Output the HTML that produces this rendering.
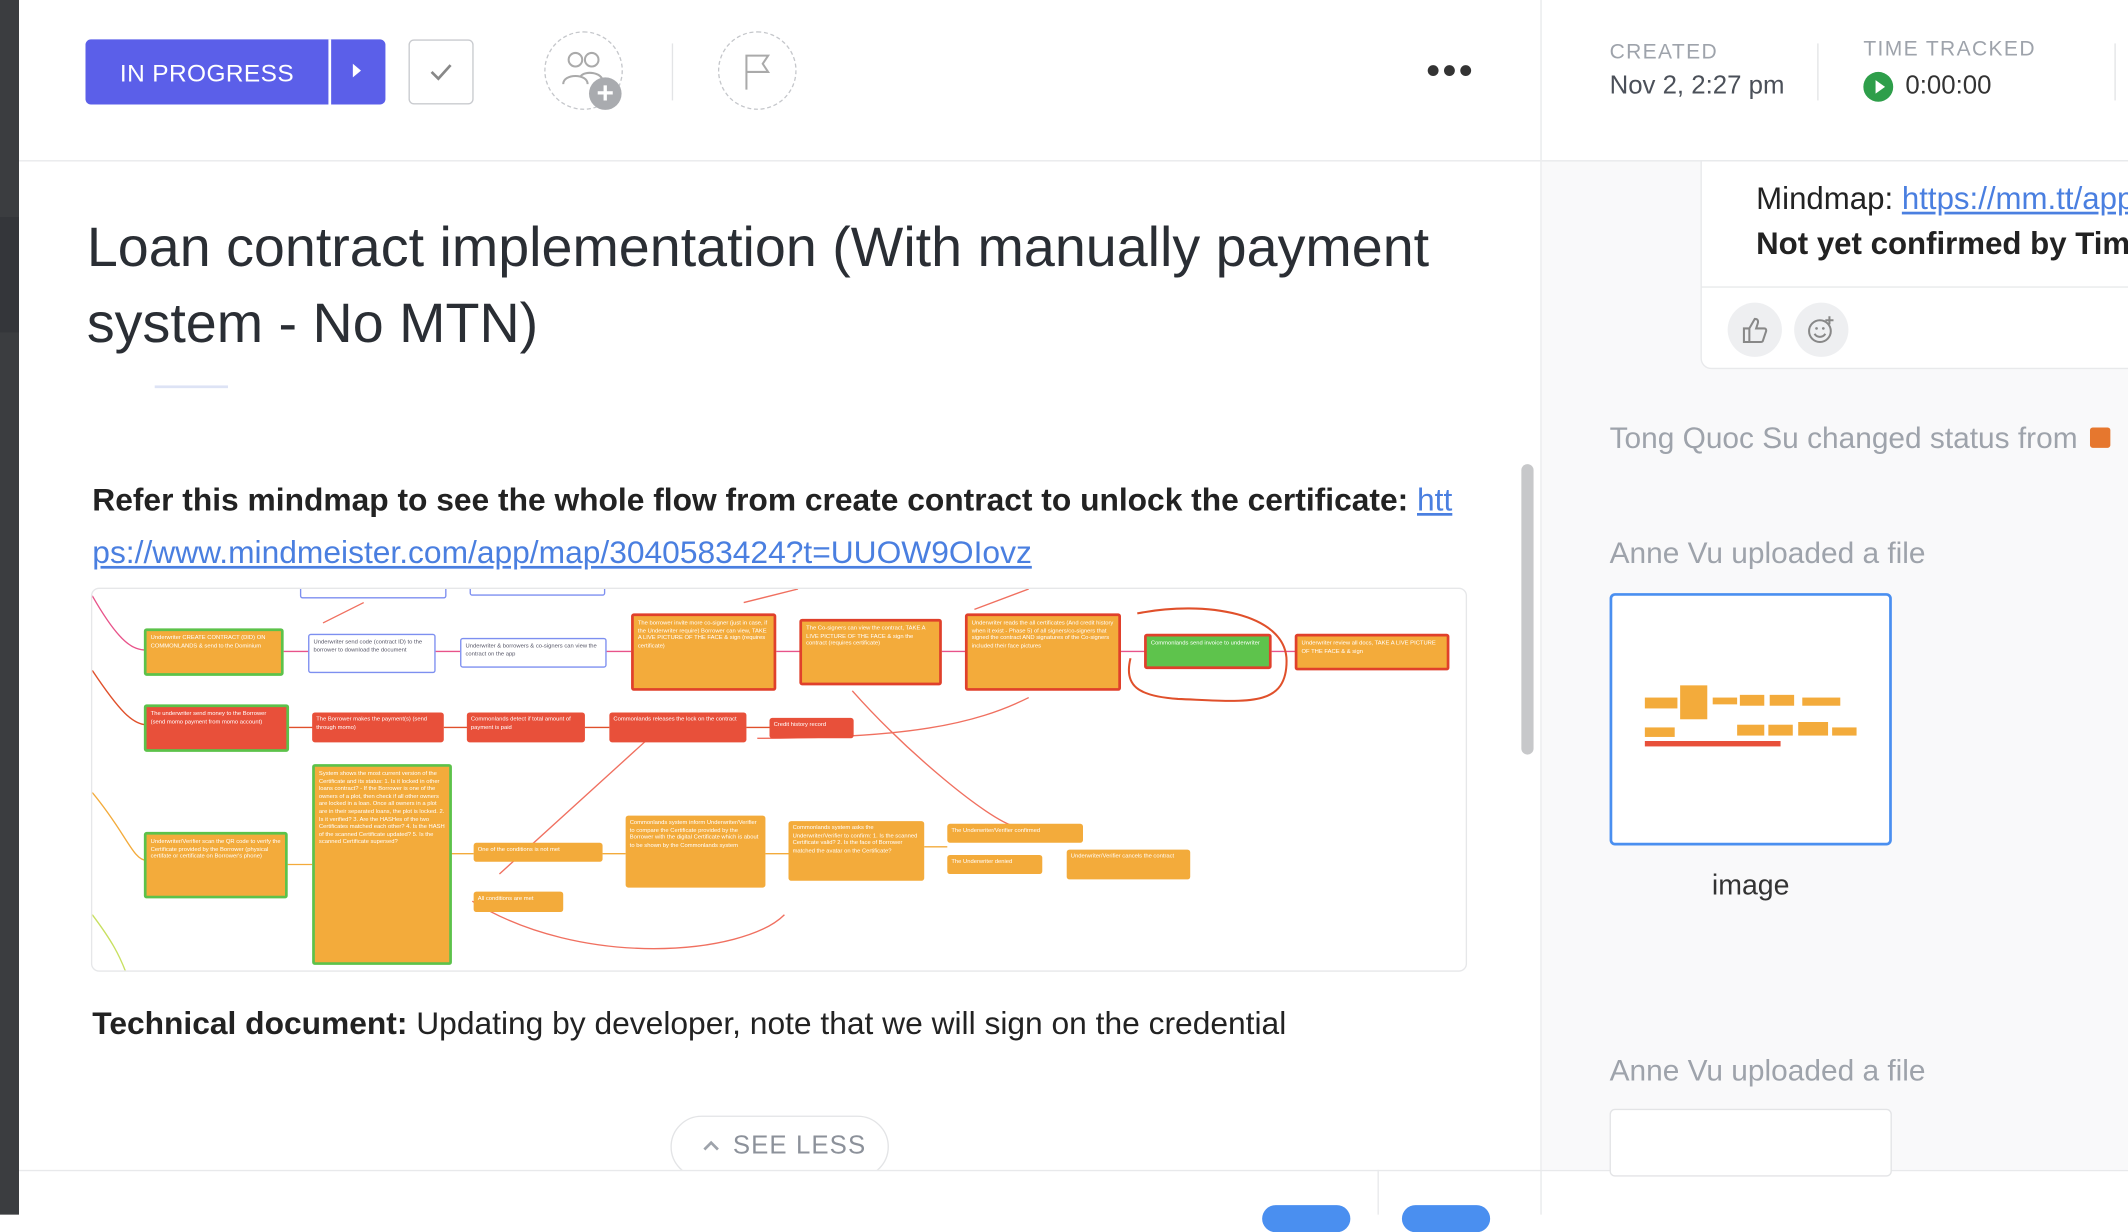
<!DOCTYPE html>
<html><head><meta charset="utf-8"><style>
*{box-sizing:border-box;margin:0;padding:0}
html,body{width:2128px;height:1214px;overflow:hidden;background:#fff;font-family:"Liberation Sans",sans-serif}
#w{position:absolute;left:0;top:0;width:1568px;height:895px;transform:scale(1.35714);transform-origin:0 0}
.a{position:absolute}
.bx{position:absolute;font-size:4.3px;line-height:5.6px;color:#fff;padding:2px 3px;border-radius:2px;overflow:hidden}
.o{background:#f3ab3b}.r{background:#e8503a}
.gb{border:2px solid #5cc24a}.rb{border:2px solid #e0402b}.wb{background:#fff;border:1px solid #7d8ff0;color:#556}
.gr{background:#5ec34c}
</style></head><body><div id="w">
<div class="a" style="left:0;top:0;width:14px;height:895px;background:#3b3d40"></div>
<div class="a" style="left:0;top:160px;width:14px;height:85px;background:#34363a"></div>
<div class="a" style="left:14px;top:0;width:1121px;height:895px;background:#fff"></div>
<div class="a" style="left:14px;top:118px;width:1121px;height:1px;background:#e8e9eb"></div>
<div class="a" style="left:63px;top:29px;width:221px;height:48px;background:#5b5fe9;border-radius:4px"></div>
<div class="a" style="left:63px;top:29px;width:179px;height:48px;color:#fff;font-size:18px;line-height:50px;text-align:center;letter-spacing:.3px">IN PROGRESS</div>
<div class="a" style="left:242px;top:29px;width:2px;height:48px;background:#fff"></div>
<div class="a" style="left:260px;top:47px;border-left:6px solid #fff;border-top:5px solid transparent;border-bottom:5px solid transparent"></div>
<div class="a" style="left:301px;top:29px;width:48px;height:48px;border:1.5px solid #c9cbcf;border-radius:4px"></div>
<svg class="a" style="left:315px;top:43px" width="20" height="20"><path d="M3 10l5 5 9-10" fill="none" stroke="#888" stroke-width="2"/></svg>
<div class="a" style="left:401px;top:23px;width:58px;height:58px;border:1.5px dashed #c5c7cb;border-radius:50%"></div>
<svg class="a" style="left:412px;top:36px" width="40" height="34"><circle cx="12" cy="8" r="5" fill="none" stroke="#aaa" stroke-width="1.5"/><circle cx="24" cy="8" r="5" fill="none" stroke="#aaa" stroke-width="1.5"/><path d="M3 26c0-8 18-8 18 0M16 20c3-4 16-3 16 4" fill="none" stroke="#aaa" stroke-width="1.5"/></svg>
<div class="a" style="left:434px;top:57px;width:24px;height:24px;border-radius:50%;background:#a9abaf;color:#fff;font-size:22px;line-height:24px;text-align:center;font-weight:bold">+</div>
<div class="a" style="left:495px;top:32px;width:1px;height:42px;background:#e3e4e6"></div>
<div class="a" style="left:529px;top:23px;width:58px;height:58px;border:1.5px dashed #c5c7cb;border-radius:50%"></div>
<svg class="a" style="left:546px;top:38px" width="26" height="30"><path d="M4 28V3h16l-4 6 4 6H4" fill="none" stroke="#aaa" stroke-width="1.5"/></svg>
<div class="a" style="left:1052px;top:48px;font-size:0">
<span style="display:inline-block;width:8px;height:8px;border-radius:50%;background:#333;margin-right:4px"></span><span style="display:inline-block;width:8px;height:8px;border-radius:50%;background:#333;margin-right:4px"></span><span style="display:inline-block;width:8px;height:8px;border-radius:50%;background:#333"></span></div>
<div class="a" style="left:64px;top:154px;width:1060px;font-size:41px;line-height:56px;color:#2a2e34">Loan contract implementation (With manually payment system - No MTN)</div>
<div class="a" style="left:114px;top:284px;width:54px;height:2px;background:#dde3f5"></div>
<div class="a" style="left:68px;top:349px;width:1030px;font-size:23.4px;line-height:39px;color:#222"><b>Refer this mindmap to see the whole flow from create contract to unlock the certificate: </b><span style="color:#4a7fe0;text-decoration:underline">htt ps://www.mindmeister.com/app/map/3040583424?t=UUOW9OIovz</span></div>
<div class="a" style="left:67px;top:433px;width:1014px;height:283px;border:1px solid #e6e7e9;border-radius:6px;overflow:hidden;background:#fff">
<svg class="a" style="left:0;top:0" width="1014" height="283"><g fill="none" stroke-width="1">
<path d="M0 5C20 40 30 45 40 45" stroke="#e8538a"/><path d="M0 60C20 90 30 100 40 100" stroke="#e0502b"/><path d="M0 150C25 180 30 200 40 200" stroke="#f3ab3b"/><path d="M0 240C15 260 20 270 25 283" stroke="#c8e060"/>
<path d="M141 46h18M253 46h18M379 46h18M504 46h18M626 46h18M758 46h18M869 46h18" stroke="#e8538a"/>
<path d="M145 102h18M259 102h18M363 102h18M482 102h18" stroke="#e0502b"/>
<path d="M144 203h18M264 195h17M376 195h17M496 195h17M613 190h17M730 205h17" stroke="#f3ab3b"/>
<path d="M280 230C360 280 480 270 510 240M490 110C600 110 650 100 690 80M560 75C600 120 660 170 680 175M480 10L520 0M650 15L690 0M410 110L300 210M200 10L170 25" stroke="#f07060"/>
<path d="M770 18c50-10 110 0 110 35s-30 30-80 28c-30-2-40-10-35-30" stroke="#e0502b" stroke-width="1.5"/>
</g></svg>
<div class="bx wb" style="left:153px;top:-3px;width:108px;height:10px"></div>
<div class="bx wb" style="left:278px;top:-3px;width:100px;height:8px"></div>
<div class="bx o gb" style="left:38px;top:29px;width:103px;height:35px">Underwriter CREATE CONTRACT (DID) ON COMMONLANDS &amp; send to the Dominium</div>
<div class="bx wb" style="left:159px;top:33px;width:94px;height:29px">Underwriter send code (contract ID) to the borrower to download the document</div>
<div class="bx wb" style="left:271px;top:36px;width:108px;height:22px">Underwriter &amp; borrowers &amp; co-signers can view the contract on the app</div>
<div class="bx o rb" style="left:397px;top:18px;width:107px;height:57px">The borrower invite more co-signer (just in case, if the Underwriter require) Borrower can view, TAKE A LIVE PICTURE OF THE FACE &amp; sign (requires certificate)</div>
<div class="bx o rb" style="left:521px;top:22px;width:105px;height:49px">The Co-signers can view the contract, TAKE A LIVE PICTURE OF THE FACE &amp; sign the contract (requires certificate)</div>
<div class="bx o rb" style="left:643px;top:18px;width:115px;height:57px">Underwriter reads the all certificates (And credit history when it exist - Phase 5) of all signers/co-signers that signed the contract AND signatures of the Co-signers included their face pictures</div>
<div class="bx gr rb" style="left:775px;top:33px;width:94px;height:26px">Commonlands send invoice to underwriter</div>
<div class="bx o rb" style="left:886px;top:33px;width:114px;height:27px">Underwriter review all docs, TAKE A LIVE PICTURE OF THE FACE &amp; &amp; sign</div>
<div class="bx r gb" style="left:38px;top:85px;width:107px;height:35px">The underwriter send money to the Borrower (send momo payment from momo account)</div>
<div class="bx r" style="left:162px;top:91px;width:97px;height:22px">The Borrower makes the payment(s) (send through momo)</div>
<div class="bx r" style="left:276px;top:91px;width:87px;height:22px">Commonlands detect if total amount of payment is paid</div>
<div class="bx r" style="left:381px;top:91px;width:101px;height:22px">Commonlands releases the lock on the contract</div>
<div class="bx r" style="left:499px;top:95px;width:62px;height:15px">Credit history record</div>
<div class="bx o gb" style="left:38px;top:179px;width:106px;height:49px">Underwriter/Verifier scan the QR code to verify the Certificate provided by the Borrower (physical certifate or certificate on Borrower's phone)</div>
<div class="bx o gb" style="left:162px;top:129px;width:103px;height:148px">System shows the most current version of the Certificate and its status: 1. Is it locked in other loans contract? - If the Borrower is one of the owners of a plot, then check if all other owners are locked in a loan. Once all owners in a plot are in their separated loans, the plot is locked. 2. Is it verified? 3. Are the HASHes of the two Certificates matched each other? 4. Is the HASH of the scanned Certificate updated? 5. Is the scanned Certificate supersed?</div>
<div class="bx o" style="left:281px;top:187px;width:95px;height:14px">One of the conditions is not met</div>
<div class="bx o" style="left:281px;top:223px;width:66px;height:15px">All conditions are met</div>
<div class="bx o" style="left:393px;top:167px;width:103px;height:53px">Commonlands system inform Underwriter/Verifier to compare the Certificate provided by the Borrower with the digital Certificate which is about to be shown by the Commonlands system</div>
<div class="bx o" style="left:513px;top:171px;width:100px;height:44px">Commonlands system asks the Underwriter/Verifier to confirm: 1. Is the scanned Certificate valid? 2. Is the face of Borrower matched the avatar on the Certificate?</div>
<div class="bx o" style="left:630px;top:173px;width:100px;height:14px">The Underwriter/Verifier confirmed</div>
<div class="bx o" style="left:630px;top:196px;width:70px;height:14px">The Underwriter denied</div>
<div class="bx o" style="left:718px;top:192px;width:91px;height:22px">Underwriter/Verifier cancels the contract</div>
</div>
<div class="a" style="left:68px;top:741px;font-size:23.4px;color:#222;white-space:nowrap"><b>Technical document:</b> Updating by developer, note that we will sign on the credential</div>
<div class="a" style="left:494px;top:822px;width:161px;height:46px;border:1px solid #e3e4e6;border-radius:23px;background:#fff"></div>
<svg class="a" style="left:517px;top:838px" width="14" height="12"><path d="M2 9l5-5 5 5" fill="none" stroke="#9ea3ab" stroke-width="2"/></svg>
<div class="a" style="left:540px;top:834px;font-size:19px;color:#8c919a;letter-spacing:.8px">SEE LESS</div>
<div class="a" style="left:1121px;top:342px;width:9px;height:214px;background:#c7c8ca;border-radius:5px"></div>
<div class="a" style="left:14px;top:862px;width:1554px;height:33px;background:#fff;border-top:1px solid #e8e9eb"></div>
<div class="a" style="left:1015px;top:862px;width:1px;height:33px;background:#e8e9eb"></div>
<div class="a" style="left:930px;top:888px;width:65px;height:20px;border-radius:10px;background:#4a8ff0"></div>
<div class="a" style="left:1033px;top:888px;width:65px;height:20px;border-radius:10px;background:#4a8ff0"></div>
<div class="a" style="left:1135px;top:0;width:1px;height:895px;background:#e8e9eb"></div>
<div class="a" style="left:1136px;top:119px;width:432px;height:743px;background:#f9f9fa"></div>
<div class="a" style="left:1136px;top:118px;width:432px;height:1px;background:#e8e9eb"></div>
<div class="a" style="left:1186px;top:30px;font-size:15.5px;color:#9ea3ab;letter-spacing:1px">CREATED</div>
<div class="a" style="left:1186px;top:53px;font-size:19px;color:#4b5059">Nov 2, 2:27 pm</div>
<div class="a" style="left:1339px;top:32px;width:1px;height:42px;background:#e3e4e6"></div>
<div class="a" style="left:1373px;top:28px;font-size:15.5px;color:#9ea3ab;letter-spacing:1px">TIME TRACKED</div>
<div class="a" style="left:1373px;top:53px;width:22px;height:22px;border-radius:50%;background:#2e9e4a"></div>
<div class="a" style="left:1382px;top:59px;border-left:7px solid #fff;border-top:5px solid transparent;border-bottom:5px solid transparent"></div>
<div class="a" style="left:1404px;top:53px;font-size:19px;color:#333">0:00:00</div>
<div class="a" style="left:1558px;top:32px;width:1px;height:42px;background:#e3e4e6"></div>
<div class="a" style="left:1253px;top:118px;width:330px;height:154px;background:#fff;border:1px solid #e8e9eb;border-radius:0 0 0 8px"></div>
<div class="a" style="left:1253px;top:211px;width:315px;height:1px;background:#e8e9eb"></div>
<div class="a" style="left:1294px;top:133px;font-size:23px;color:#222;white-space:nowrap">Mindmap: <span style="color:#4a7fe0;text-decoration:underline">https://mm.tt/app</span></div>
<div class="a" style="left:1294px;top:166px;font-size:23px;color:#222;font-weight:bold;white-space:nowrap">Not yet confirmed by Tim</div>
<div class="a" style="left:1273px;top:223px;width:40px;height:40px;border-radius:50%;background:#eeeff1"></div>
<svg class="a" style="left:1282px;top:232px" width="22" height="22"><path d="M3 10h4v10H3zM7 10l4-7c2 0 3 1 2 4l-1 3h6c1 0 2 1 1 3l-2 6c0 1-1 1-2 1H7" fill="none" stroke="#888" stroke-width="1.5"/></svg>
<div class="a" style="left:1322px;top:223px;width:40px;height:40px;border-radius:50%;background:#eeeff1"></div>
<svg class="a" style="left:1331px;top:232px" width="22" height="22"><circle cx="10" cy="12" r="8" fill="none" stroke="#888" stroke-width="1.5"/><path d="M6 14c2 3 6 3 8 0" fill="none" stroke="#888" stroke-width="1.5"/><circle cx="7.5" cy="10" r="1" fill="#888"/><circle cx="12.5" cy="10" r="1" fill="#888"/><path d="M17 1v6M14 4h6" stroke="#888" stroke-width="1.5"/></svg>
<div class="a" style="left:1186px;top:310px;font-size:22px;color:#9ea3ab;white-space:nowrap">Tong Quoc Su changed status from</div>
<div class="a" style="left:1540px;top:315px;width:15px;height:15px;background:#e6772e;border-radius:2px"></div>
<div class="a" style="left:1186px;top:395px;font-size:22px;color:#9ea3ab">Anne Vu uploaded a file</div>
<div class="a" style="left:1186px;top:437px;width:208px;height:186px;border:2px solid #4a8ff0;border-radius:4px;background:#fff"></div>
<div class="a" style="left:1212px;top:514px;width:24px;height:8px;background:#f3ab3b"></div>
<div class="a" style="left:1238px;top:505px;width:20px;height:25px;background:#f3ab3b"></div>
<div class="a" style="left:1262px;top:514px;width:18px;height:5px;background:#f3ab3b"></div>
<div class="a" style="left:1282px;top:512px;width:18px;height:8px;background:#f3ab3b"></div>
<div class="a" style="left:1304px;top:512px;width:18px;height:8px;background:#f3ab3b"></div>
<div class="a" style="left:1328px;top:514px;width:28px;height:6px;background:#f3ab3b"></div>
<div class="a" style="left:1212px;top:536px;width:22px;height:7px;background:#f3ab3b"></div>
<div class="a" style="left:1280px;top:534px;width:20px;height:8px;background:#f3ab3b"></div>
<div class="a" style="left:1303px;top:534px;width:18px;height:8px;background:#f3ab3b"></div>
<div class="a" style="left:1325px;top:532px;width:22px;height:10px;background:#f3ab3b"></div>
<div class="a" style="left:1350px;top:536px;width:18px;height:6px;background:#f3ab3b"></div>
<div class="a" style="left:1212px;top:546px;width:100px;height:4px;background:#e8503a"></div>
<div class="a" style="left:1186px;top:641px;width:208px;text-align:center;font-size:21px;color:#333">image</div>
<div class="a" style="left:1186px;top:776px;font-size:22px;color:#9ea3ab">Anne Vu uploaded a file</div>
<div class="a" style="left:1186px;top:817px;width:208px;height:50px;border:1px solid #e3e4e6;border-radius:4px;background:#fff"></div>
</div></body></html>
